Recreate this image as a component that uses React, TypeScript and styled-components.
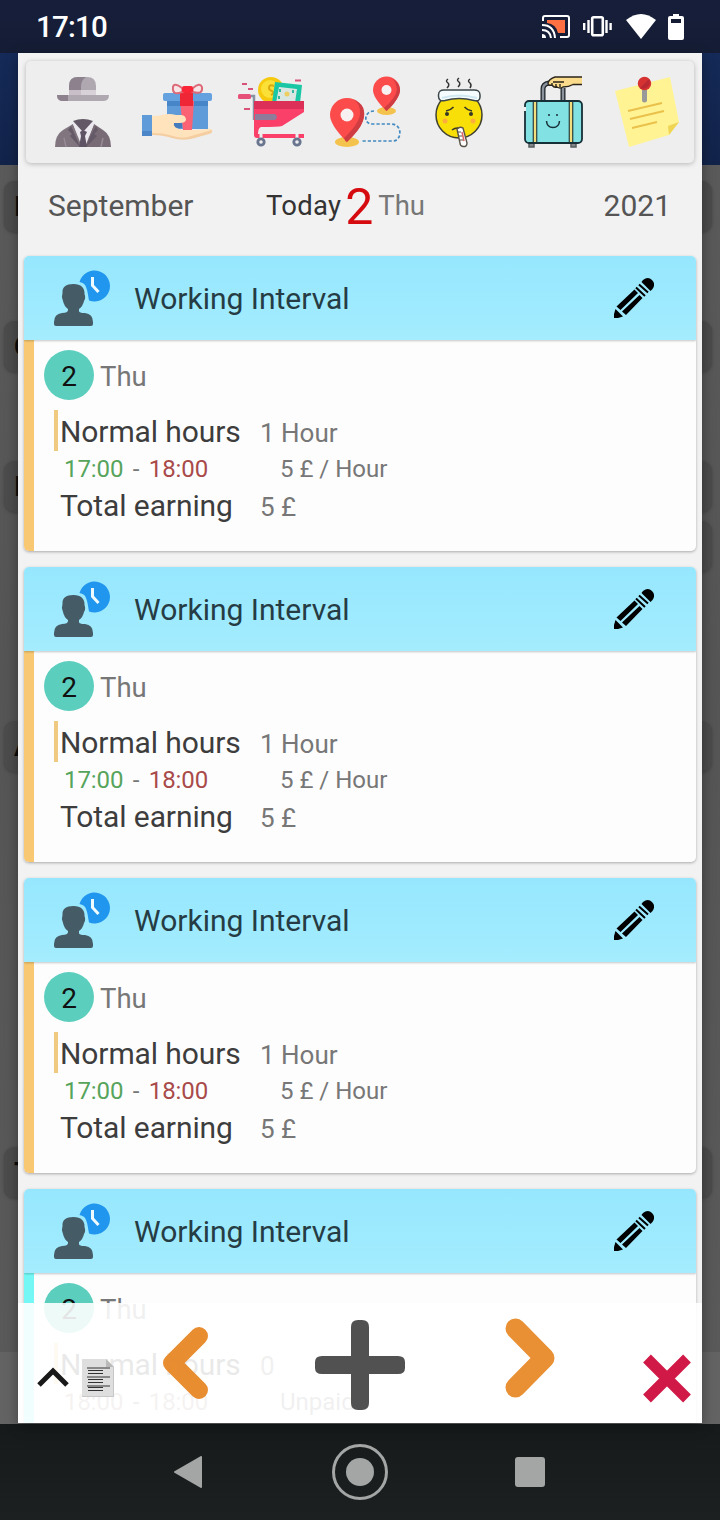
import React from "react";
import styled, { createGlobalStyle } from "styled-components";

const Global = createGlobalStyle`
  * { box-sizing: border-box; }
  body { margin: 0; font-family: Roboto, "Liberation Sans", sans-serif; }
  svg { display: block; flex: none; }
`;

const Screen = styled.div`
  width: 720px;
  height: 1520px;
  display: flex;
  flex-direction: column;
  overflow: hidden;
  background: #5a5a5a;
`;

const StatusBar = styled.header`
  height: 53px;
  flex: none;
  display: flex;
  align-items: center;
  padding: 0 36px;
  background: linear-gradient(#161e3a, #151d35);
  color: #fff;
`;

const Clock = styled.span`
  font-size: 29.5px;
  font-weight: 500;
  line-height: 53px;
  letter-spacing: -0.8px;
  padding-top: 2px;
  margin-right: auto;
`;

const StatusIcons = styled.div`
  display: flex;
  align-items: center;
`;

const Stage = styled.main`
  position: relative;
  height: 1371px;
  flex: none;
`;

const Backdrop = styled.div`
  height: 100%;
  background: linear-gradient(#5b5b5b, #555 45%, #5a5a5a);
  display: flex;
  flex-direction: column;
`;

const BackdropHeader = styled.div`
  height: 112px;
  flex: none;
  background: linear-gradient(#152a58, #12234a);
`;

const BackdropRow = styled.div<{ $gap: number; $indent?: number }>`
  margin: ${(p) => p.$gap}px 8px 0 ${(p) => p.$indent ?? 4}px;
  height: 51px;
  flex: none;
  border-radius: 10px;
  background: #4c4c4c;
  box-shadow: 0 1px 3px #444;
  padding-left: 10px;
  font-size: 28px;
  font-weight: 700;
  line-height: 51px;
  color: #0b0b0b;
`;

const BackdropFooter = styled.div`
  margin-top: auto;
  height: 72px;
  flex: none;
  background: #636363;
`;

const Dialog = styled.section`
  position: absolute;
  top: 0;
  left: 18px;
  width: 684px;
  height: 1370px;
  overflow: hidden;
  background: #f2f2f2;
  box-shadow: 0 3px 12px rgba(0, 0, 0, 0.35);
  display: flex;
  flex-direction: column;
`;

const Toolbar = styled.div`
  margin: 8px 8px 0;
  height: 102px;
  flex: none;
  padding-left: 21px;
  display: flex;
  align-items: center;
  gap: 22px;
  border-radius: 5px;
  background: #eee;
  box-shadow: 0 1px 5px rgba(0, 0, 0, 0.25);
`;

const DateRow = styled.div`
  height: 93px;
  flex: none;
  display: grid;
  grid-template-columns: 218px 1fr auto;
  align-items: center;
  padding: 0 31px 9px 30px;
  font-size: 30px;
  color: #555;
`;

const DateToday = styled.div`
  display: flex;
  align-items: center;
  font-size: 27.5px;
  color: #777;
`;

const TodayLabel = styled.span`
  color: #333;
  letter-spacing: 0.25px;
`;

const TodayNumber = styled.span`
  width: 28px;
  margin: 0 5px 0 4px;
  padding-top: 3px;
  font-size: 50px;
  line-height: 50px;
  color: #d50b10;
`;

const CardList = styled.div`
  padding: 0 6px;
  display: flex;
  flex-direction: column;
  gap: 16px;
`;

const Card = styled.article`
  height: 295px;
  flex: none;
  display: flex;
  flex-direction: column;
  overflow: hidden;
  border-radius: 5px;
  background: #fdfdfd;
  box-shadow: 0 1px 3px rgba(0, 0, 0, 0.3);
`;

const CardHeader = styled.div`
  height: 84px;
  flex: none;
  display: flex;
  align-items: center;
  padding: 0 42px 0 30px;
  background: linear-gradient(#96e7fe, #a4ecfe);
  box-shadow: 0 1px 2px rgba(0, 0, 0, 0.22);
  z-index: 1;
`;

const CardTitle = styled.h2`
  margin: 0 auto 0 24px;
  font-size: 30px;
  font-weight: 400;
  line-height: 84px;
  padding-top: 1px;
  color: #263c44;
`;

const CardBody = styled.div<{ $accent: string }>`
  flex: 1;
  padding: 10px 0 0 20px;
  background: linear-gradient(${(p) => p.$accent}, ${(p) => p.$accent}) 0 0 / 10px 100% no-repeat;
`;

const DayLine = styled.div`
  display: flex;
  align-items: center;
  gap: 6px;
  height: 50px;
  margin-bottom: 10px;
  font-size: 27.5px;
  color: #777;
`;

const DayBadge = styled.span`
  width: 50px;
  height: 50px;
  padding-top: 2px;
  border-radius: 50%;
  background: #5bcebe;
  color: #111;
  font-size: 28px;
  line-height: 50px;
  text-align: center;
`;

const DayName = styled.span`
  padding-top: 2px;
`;

const Line = styled.div<{ $height: number; $accent?: string; $top?: number }>`
  height: ${(p) => p.$height}px;
  margin-left: 10px;
  border-left: 4px solid ${(p) => p.$accent || "transparent"};
  padding: ${(p) => p.$top || 0}px 0 0 2px;
  display: grid;
  grid-template-columns: 200px 1fr;
  align-items: center;
  line-height: 34px;
  font-size: 26px;
  color: #777;
`;

const Label = styled.span`
  font-size: 30px;
  letter-spacing: -0.1px;
  color: #3d3d3d;
`;

const Value = styled.span`
  padding-top: 3px;
`;

const TimeRange = styled.span`
  display: flex;
  gap: 9.5px;
  padding-left: 4px;
  font-size: 24px;
  letter-spacing: -0.1px;
`;

const Time = styled.span<{ $color: string }>`
  color: ${(p) => p.$color};
`;

const Rate = styled.span`
  padding-left: 20px;
  font-size: 24px;
`;

const ActionBar = styled.footer`
  position: absolute;
  left: 0;
  right: 0;
  bottom: 0;
  z-index: 2;
  height: 120px;
  display: flex;
  align-items: flex-start;
  background: rgba(255, 255, 255, 0.89);
`;

const Action = styled.button<{ $top: number; $left: number; $opacity?: number }>`
  border: 0;
  padding: 0;
  background: none;
  opacity: ${(p) => p.$opacity ?? 1};
  margin: ${(p) => p.$top}px 0 0 ${(p) => p.$left}px;
`;

const NavBar = styled.nav`
  height: 96px;
  flex: none;
  display: flex;
  align-items: center;
  padding-left: 174px;
  background: linear-gradient(#161a1b, #1c2020);
`;

const NavCircle = styled.span`
  width: 56px;
  height: 56px;
  margin: 0 127px 0 130px;
  border: 3px solid #a4a6a6;
  border-radius: 50%;
  display: grid;
  place-items: center;
  &::after {
    content: "";
    width: 28px;
    height: 28px;
    border-radius: 50%;
    background: #a4a6a6;
  }
`;

const NavSquare = styled.span`
  width: 30px;
  height: 30px;
  border-radius: 3px;
  background: #a4a6a6;
`;

const ToolIcon = ({ children }: { children: React.ReactNode }) => (
  <svg width="72" height="72" viewBox="0 0 72 72" fill="none">{children}</svg>
);

const SuitIcon = () => (
  <ToolIcon>
    <path d="M22 20V10Q22 1 31 1H40Q49 1 49 10V20Z" fill="#afa8b0" />
    <path d="M22 20V10Q22 1 31 1H39Q34 4 34 11V20Z" fill="#8d818e" />
    <path d="M22 14H49V20H22Z" fill="#d8d2d8" />
    <path d="M22 14H34V20H22Z" fill="#c8bfc8" />
    <path d="M10 19H62Q62 25 56 25H16Q10 25 10 19Z" fill="#afa8b0" />
    <path d="M10 19H21V25H16Q10 25 10 19Z" fill="#8d818e" />
    <path d="M24 47L36 44L49 47L44 71H28Z" fill="#ebe9ef" />
    <path d="M8 71Q8 59 16 54L26 48L35 71Z" fill="#81757f" />
    <path d="M64 71Q64 59 56 54L47 48L38 71Z" fill="#786b76" />
    <path d="M26 48L31 60L35 55L36 60L34 71H35L37 71L38 60L37 55L42 60L47 48L36 56Z" fill="#ebe9ef" />
    <path d="M26 45Q36 41 46 45L36 56Z" fill="#635866" />
    <path d="M33 56L36 54L40 56L38 60L40 71H32L34 60Z" fill="#5e5365" />
    <path d="M24 50L21 54L25 58L23 60L33 71L29 61ZM49 50L51 54L47 58L50 60L39 71L43 61Z" fill="#645966" />
    <path d="M17 62L19 71M56 62L54 71" stroke="#968b96" strokeWidth="1.500" />
  </ToolIcon>
);

const GiftIcon = () => (
  <ToolIcon>
    <path d="M26 24H67V53H26Z" fill="#609bd9" />
    <path d="M26 25H67V30H26Z" fill="#4585c8" />
    <rect x="22" y="17" width="49" height="8" rx="2" fill="#65a0df" />
    <path d="M39 25H53L51 54H42Z" fill="#fb6375" />
    <path d="M39 17H52V30H39Z" fill="#ef2635" />
    <path d="M41 16Q31 20 32 11Q33 6 41 12Q42 15 41 16ZM52 16Q62 19 61 11Q59 6 52 12Q51 15 52 16Z" fill="#f7e4e6" stroke="#dc6a78" strokeWidth="2" />
    <rect x="41" y="10" width="11" height="7" rx="2" fill="#fa2638" />
    <path d="M32 46H41V52H32Z" fill="#447bbd" />
    <path d="M11 40Q17 40 21 39Q28 37 35 39H41Q45 40 45 44Q44 47 39 47H33Q31 52 42 54H53L67 53Q72 52 71 56L50 62Q40 64 32 61Q24 58 11 58Z" fill="#ffe3bd" />
    <path d="M11 57Q23 57 32 60Q42 63 50 60L71 54Q72 57 68 58L50 63Q40 65 31 62Q22 59 11 59Z" fill="#f4cea1" />
    <path d="M1 39H11V60H1Z" fill="#609bd9" />
    <path d="M1 55H11V60H1Z" fill="#4b86c8" />
  </ToolIcon>
);

const CartIcon = () => (
  <ToolIcon>
    <path d="M7 8H12M13 13H18M9 33H15M60 4.500H66" stroke="#d85379" strokeWidth="2" />
    <circle cx="36" cy="14" r="13" fill="#f6c90e" />
    <circle cx="35" cy="13" r="9" fill="#fbe037" />
    <path d="M39 10Q34 8 34 12Q34 14 37 15Q40 17 36 19" stroke="#dba80f" strokeWidth="2" />
    <path d="M40 6L67 9L65 27H37Z" fill="#19c7a4" />
    <path d="M44 11L62 13L60 27H41Z" fill="#d9e6e2" />
    <circle cx="52" cy="18" r="2.500" fill="#edce62" />
    <path d="M45 13V16M58 14V17M44 20V23" stroke="#34b69f" strokeWidth="2" />
    <path d="M16 20H19V44" stroke="#8792a2" strokeWidth="2.500" />
    <rect x="3" y="18" width="13" height="5" rx="1.500" fill="#e64f78" />
    <path d="M19 25H69V36L47 50Q44 51 26 51Q23 52 23 58H69V62H22Q19 62 19 59Z" fill="#fa3f68" />
    <path d="M19 25H69V33H19Z" fill="#dc3058" />
    <path d="M20 38H40Q44 41 40 44H20Z" fill="#8f7c9b" />
    <path d="M26 57V63M62 57V63" stroke="#eee" strokeWidth="3" />
    <circle cx="26" cy="66" r="3.200" fill="#eee" stroke="#69758e" strokeWidth="2.800" />
    <circle cx="62" cy="66" r="3.200" fill="#eee" stroke="#69758e" strokeWidth="2.800" />
  </ToolIcon>
);

const RouteIcon = () => (
  <ToolIcon>
    <path d="M45 35C35 35 34 48 43 48H62C74 48 73 65 64 65H33" stroke="#438ac0" strokeWidth="1.700" strokeDasharray="3.200 2" />
    <ellipse cx="18" cy="66" rx="12" ry="5" fill="#f4c34e" />
    <ellipse cx="57.500" cy="35" rx="9.500" ry="4" fill="#f4c34e" />
    <path d="M18 66Q1 49 1 39A17 17 0 0 1 35 39Q35 49 18 66Z" fill="#fc4b4b" />
    <path d="M24 23Q39 29 34 45Q31 54 18 66Q16 65 15 62Q30 48 31 38Q32 28 24 23Z" fill="#cf3c42" />
    <circle cx="18" cy="39" r="6.500" fill="#f7f2f1" />
    <path d="M57.500 35Q44 22 44 14A13.500 13.500 0 0 1 71 14Q71 22 57.500 35Z" fill="#fc4b4b" />
    <path d="M62 2Q74 8 70 19Q66 28 57.500 35L55 32Q67 22 68 13Q67 5 62 2Z" fill="#cf3c42" />
    <circle cx="57.500" cy="14" r="5" fill="#f7f2f1" />
  </ToolIcon>
);

const SickIcon = () => (
  <ToolIcon>
    <path d="M25 3Q22 5 25 7Q27 9 24 12M36 2Q33 4 36 6Q38 8 35 11M47 3Q44 5 47 7Q49 9 47 12" stroke="#333" strokeWidth="1.500" />
    <circle cx="36" cy="39" r="23" fill="#f9df08" stroke="#3f4030" strokeWidth="1.500" />
    <circle cx="22" cy="45" r="2.500" fill="#fdae3d" />
    <circle cx="50" cy="45" r="2.500" fill="#fdae3d" />
    <path d="M15.500 19Q15.500 13.500 22 14H50Q57 13.500 57 19V21Q57 26 51 24.500Q36 20.500 22 24.500Q15.500 26 15.500 20Z" fill="#f6fdff" stroke="#3c464a" strokeWidth="1.500" />
    <path d="M19 22Q36 17 54 22" stroke="#cfe8f1" strokeWidth="2" />
    <path d="M23 35Q28 34 30.500 31M49 35Q44 34 41.500 31M29 54Q32 51.500 36 52" stroke="#363827" strokeWidth="1.500" />
    <circle cx="24" cy="38" r="2" fill="#363827" />
    <circle cx="48" cy="38" r="2" fill="#363827" />
    <path d="M34 53Q37 50 40 52L44 67Q44 71 40 70.500Q37 70 37 67Z" fill="#fff" stroke="#5a5346" strokeWidth="1.400" />
    <path d="M39 56L41 65" stroke="#e06161" strokeWidth="1.500" />
    <path d="M35 56H38M36 60H39M37 64H40" stroke="#5a5346" />
  </ToolIcon>
);

const SuitcaseIcon = () => (
  <ToolIcon>
    <path d="M26 24V13Q26 8 32 7M46 12V24" stroke="#20272c" strokeWidth="5" />
    <path d="M26 24V13Q26 8 32 7M46 12V24" stroke="#8c929c" strokeWidth="2.400" />
    <path d="M65 1H38Q32 3 31 7Q31 10 35 9Q37 12 40 11Q43 13 46 11Q52 11 56 8.500H65Z" fill="#fadb8b" />
    <path d="M65 1H38Q32 3 31 7Q31 10 35 9Q37 12 40 11Q43 13 46 11Q52 11 56 8.500H65M35 7V9M39 8V11M43 8V11M36 6H47" stroke="#29251c" strokeWidth="1.400" />
    <path d="M12 67V71H17V67M54 67V71H59V67" fill="#888" stroke="#555d60" strokeWidth="1.500" />
    <rect x="8" y="25" width="57" height="42" rx="4" fill="#82e2e3" stroke="#172f36" strokeWidth="1.800" />
    <path d="M18 25V67M54 25V67" stroke="#172f36" strokeWidth="4.600" />
    <path d="M18 26V66M54 26V66" stroke="#f0de7f" strokeWidth="2.400" />
    <path d="M29.500 45Q30 51.500 36 51.500Q42 51.500 42.500 45M31 39H33M39 39H41" stroke="#172f36" strokeWidth="1.500" />
    <path d="M8 31V35" stroke="#eee" strokeWidth="2" />
  </ToolIcon>
);

const NoteIcon = () => (
  <ToolIcon>
    <path d="M4 15L59 1L68 46L58 59L18 71Z" fill="#fff394" />
    <path d="M57 50L68 46L58 59Z" fill="#f0d454" />
    <path d="M17 35L51 27M19 43L53 35M21 52L46 46" stroke="#eac14a" strokeWidth="2" />
    <path d="M33.500 12V24" stroke="#999" strokeWidth="5" strokeLinecap="round" />
    <circle cx="33.500" cy="7.500" r="6.700" fill="#d73232" />
    <path d="M29 12L38 3A6.700 6.700 0 0 1 29 12Z" fill="#b92932" />
  </ToolIcon>
);

const PersonClockIcon = () => (
  <svg width="56" height="56" viewBox="0 0 56 56">
    <path d="M25.500 12A15.500 15.500 0 1 1 35 30.500C34 26 34 22 32 17Q31 13 25.500 12Z" fill="#2196ef" />
    <path d="M38.500 7V15.500L44.500 22" fill="none" stroke="#edfaff" strokeWidth="3" />
    <path d="M19.500 14C27 14 31 18 30.500 24Q32 28 30 31Q29 36 25 39V41Q25 43 31 43Q39 44 39 52V54Q39 56 37 56H2Q0 56 0 54V52Q0 44 8 43Q14 43 14 40V39Q10 36 9 31Q7 27 8.500 23C8 17 12 14 19.500 14Z" fill="#455b66" />
  </svg>
);

const PencilIcon = () => (
  <svg width="40" height="40" viewBox="0 0 40 40">
    <path d="M29 2Q34-2 38 2Q42 6 38.500 11L36.500 13L27.500 4Z" />
    <path d="M25 6.500L34 14.500M22 9.500L31 18" stroke="#000" strokeWidth="2" />
    <path d="M20.500 11.500L24 15L6.500 32L2.500 28.500ZM25.500 17L28.500 20L12 37L8 33.500Z" />
    <path d="M1.500 31L9 38.500L4 40H0V36Z" />
  </svg>
);

const StatusGlyphs = () => (
  <StatusIcons>
    <svg width="28" height="24" viewBox="0 0 28 24" fill="none">
      <path d="M1 6V3Q1 1 3 1H25Q27 1 27 3V20Q27 22 25 22H18" stroke="#fff" strokeWidth="2" />
      <path d="M5 5H23V18H16Q14 9 5 8Z" fill="#ff7043" />
      <path d="M0 10Q12 10 13 23M0 15Q8 15 9 23" stroke="#fff" strokeWidth="2" />
      <path d="M0 19Q4 19 4 23H0Z" fill="#fff" />
    </svg>
    <svg width="56" height="24" viewBox="-13 0 56 24" fill="none" stroke="#fff">
      <rect x="9.200" y="2.200" width="10.600" height="18" rx="1.500" strokeWidth="2.600" />
      <path d="M5.500 5V18M23.500 5V18M1.200 8V15M27.600 8V15" strokeWidth="2.400" />
    </svg>
    <svg width="30" height="26" viewBox="0 0 30 26"><path d="M0 6Q15-6 30 6L15 25Z" fill="#fff" /></svg>
    <svg width="28" height="26" viewBox="-12 0 28 26">
      <path d="M5 0H11V2H14Q16 2 16 4V24Q16 26 14 26H2Q0 26 0 24V4Q0 2 2 2H5Z" fill="#fff" />
      <path d="M3 5H13V9H3Z" fill="#151d35" />
    </svg>
  </StatusIcons>
);

const DocIcon = () => (
  <svg width="32" height="38" viewBox="0 0 32 38" fill="none">
    <path d="M0 0H24L32 8V38H0Z" fill="#dedede" />
    <path d="M24 0V8H32Z" fill="#b9b9b9" />
    <path d="M31.500 8V37.500H0" stroke="#c7c7c7" />
    <path d="M5 9H28M5 18H28M5 27H28" stroke="#888" strokeWidth="2" />
    <path d="M6 11.500H21M6 14.500H21M6 20.500H21M6 23.500H21M6 28.500H21M6 31.500H21" stroke="#333" />
  </svg>
);

type Shift = { rate: string; hours: string; start: string; total: string; accent: string };
const paid: Shift = { rate: "5 £ / Hour", hours: "1 Hour", start: "17:00", total: "5 £", accent: "#f8c873" };
const shifts: Shift[] = [paid, paid, paid, { rate: "Unpaid", hours: "0", start: "18:00", total: "", accent: "#75f8f5" }];

const ShiftCard = ({ shift }: { shift: Shift }) => (
  <Card>
    <CardHeader>
      <PersonClockIcon />
      <CardTitle>Working Interval</CardTitle>
      <PencilIcon />
    </CardHeader>
    <CardBody $accent={shift.accent}>
      <DayLine><DayBadge>2</DayBadge><DayName>Thu</DayName></DayLine>
      <Line $height={41} $accent="#f0ca80" $top={2}><Label>Normal hours</Label><Value>{shift.hours}</Value></Line>
      <Line $height={36}>
        <TimeRange>
          <Time $color={shift.total ? "#57a45c" : "#a08b8b"}>{shift.start}</Time>
          <span>-</span>
          <Time $color={shift.total ? "#a94a4a" : "#a08b8b"}>18:00</Time>
        </TimeRange>
        <Rate>{shift.rate}</Rate>
      </Line>
      {shift.total && <Line $height={36}><Label>Total earning</Label><Value>{shift.total}</Value></Line>}
    </CardBody>
  </Card>
);

export default function App() {
  return (
    <Screen>
      <Global />
      <StatusBar><Clock>17:10</Clock><StatusGlyphs /></StatusBar>
      <Stage>
        <Backdrop>
          <BackdropHeader />
          <BackdropRow $gap={16}>I</BackdropRow>
          <BackdropRow $gap={89}>O</BackdropRow>
          <BackdropRow $gap={89}>I</BackdropRow>
          <BackdropRow $gap={9} $indent={360} />
          <BackdropRow $gap={149}>A</BackdropRow>
          <BackdropRow $gap={375}>T</BackdropRow>
          <BackdropFooter />
        </Backdrop>
        <Dialog>
          <Toolbar>
            <SuitIcon /><GiftIcon /><CartIcon /><RouteIcon /><SickIcon /><SuitcaseIcon /><NoteIcon />
          </Toolbar>
          <DateRow>
            <span>September</span>
            <DateToday><TodayLabel>Today</TodayLabel><TodayNumber>2</TodayNumber>Thu</DateToday>
            <span>2021</span>
          </DateRow>
          <CardList>{shifts.map((s, i) => <ShiftCard key={i} shift={s} />)}</CardList>
          <ActionBar>
            <Action $top={64} $left={19} aria-label="Expand">
              <svg width="32" height="21" viewBox="0 0 32 21"><path d="M2 18L16 4L30 18" fill="none" stroke="#191919" strokeWidth="5" /></svg>
            </Action>
            <Action $top={56} $left={13} aria-label="Notes"><DocIcon /></Action>
            <Action $top={24} $left={49} $opacity={0.95} aria-label="Previous">
              <svg width="45" height="72" viewBox="0 0 45 72"><path d="M36 9L9 36L36 63" fill="none" stroke="#e78827" strokeWidth="18" strokeLinecap="round" strokeLinejoin="round" /></svg>
            </Action>
            <Action $top={17} $left={107} aria-label="Add">
              <svg width="90" height="90" viewBox="0 0 90 90"><path d="M43 0H47Q54 0 54 7V36H83Q90 36 90 42V48Q90 54 83 54H54V83Q54 90 47 90H43Q36 90 36 83V54H7Q0 54 0 48V42Q0 36 7 36H36V7Q36 0 43 0Z" fill="#515151" /></svg>
            </Action>
            <Action $top={15} $left={100} aria-label="Next">
              <svg width="50" height="80" viewBox="0 0 50 80"><path d="M10.500 10.500L39.500 40L10.500 69.500" fill="none" stroke="#e89033" strokeWidth="20" strokeLinecap="round" strokeLinejoin="round" /></svg>
            </Action>
            <Action $top={51} $left={88} aria-label="Close">
              <svg width="48" height="49" viewBox="0 0 48 49"><path d="M4 4.500L44 44.500M44 4.500L4 44.500" stroke="#d01947" strokeWidth="11" /></svg>
            </Action>
          </ActionBar>
        </Dialog>
      </Stage>
      <NavBar>
        <svg width="28" height="32" viewBox="0 0 28 32"><path d="M1 16L27 1V31Z" fill="#a4a6a6" stroke="#a4a6a6" strokeWidth="2" strokeLinejoin="round" /></svg>
        <NavCircle />
        <NavSquare />
      </NavBar>
    </Screen>
  );
}
